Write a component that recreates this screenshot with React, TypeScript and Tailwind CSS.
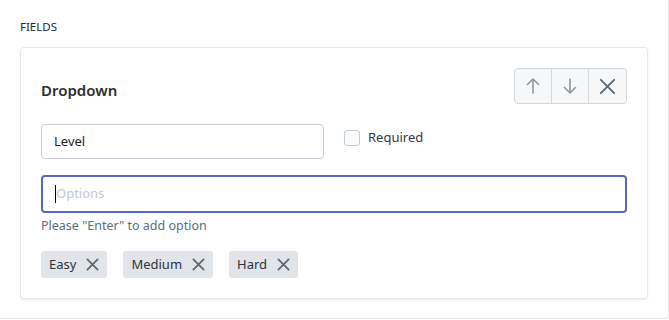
import React from 'react';

const tags = ['Easy', 'Medium', 'Hard'];

const XIcon: React.FC<{ className?: string; size?: number; stroke?: number }> = ({ className, size = 13, stroke = 2 }) => (
  <svg width={size} height={size} viewBox="0 0 14 14" className={className} fill="none" stroke="currentColor" strokeWidth={stroke} strokeLinecap="round">
    <path d="M1.5 1.5 L12.5 12.5 M12.5 1.5 L1.5 12.5" />
  </svg>
);

const App: React.FC = () => {
  return (
    <div
      className="w-[669px] h-[320px] bg-white"
      style={{ fontFamily: '"Noto Sans", "Open Sans", sans-serif' }}
    >
      <div className="h-[319px] border-r border-b border-[#e4e4e4] rounded-br-[4px] pt-[19px] pl-5 pr-5 pb-5 flex flex-col">
        <div className="text-[11.5px] leading-4 text-[#1c2a38] uppercase mb-3">Fields</div>

        {/* Field card */}
        <div className="flex-1 bg-white border border-[#e8e8e8] rounded-[4px] shadow-[0_1px_2px_rgba(0,0,0,0.08)] p-5">
          <div className="flex items-center justify-between h-9 mb-5">
            <h3 className="text-[15px] font-semibold text-[#2b2f33] pt-2">Dropdown</h3>
            <div className="flex h-9 border border-[#d3d8de] rounded-[4px] bg-[#f5f7f9] overflow-hidden">
              <button className="w-[37px] flex items-center justify-center text-[#8d97a1] border-r border-[#d3d8de]">
                <svg width="14" height="18" viewBox="0 0 14 18" fill="none" stroke="currentColor" strokeWidth="1.6" strokeLinecap="round" strokeLinejoin="round">
                  <path d="M7 16 V2 M1.5 7.5 L7 2 L12.5 7.5" />
                </svg>
              </button>
              <button className="w-[37px] flex items-center justify-center text-[#8d97a1] border-r border-[#d3d8de]">
                <svg width="14" height="18" viewBox="0 0 14 18" fill="none" stroke="currentColor" strokeWidth="1.6" strokeLinecap="round" strokeLinejoin="round">
                  <path d="M7 2 V16 M1.5 10.5 L7 16 L12.5 10.5" />
                </svg>
              </button>
              <button className="w-[37px] flex items-center justify-center text-[#5f6a75]">
                <XIcon size={17} stroke={1.6} />
              </button>
            </div>
          </div>

          <div className="grid grid-cols-2 gap-5">
            <div className="h-[35px] border border-[#c9ced6] rounded-[4px] px-3 flex items-center text-[13px] text-[#1f2328]">
              Level
            </div>
            <label className="flex items-center gap-2 h-[28px]">
              <span className="w-4 h-4 border border-[#c4cad1] rounded-[3px] bg-[#fafbfc]"></span>
              <span className="text-[13px] text-[#2f3a45]">Required</span>
            </label>
          </div>

          <div className="mt-4 h-[38px] border-2 border-[#5b68bf] rounded-[4px] pl-3 flex items-center text-[13px]">
            <span className="w-px h-[18px] bg-black"></span>
            <span className="text-[#c3c8cf]">Options</span>
          </div>

          <div className="mt-[3px] text-[12.5px] leading-5 text-[#616c77]">Please "Enter" to add option</div>

          <div className="mt-[15px] flex gap-4">
            {tags.map((t) => (
              <div key={t} className="h-[27px] flex items-center gap-[10px] pl-2 pr-2 rounded-[3px] bg-[#e1e4e9] text-[13px] text-[#2b333b]">
                {t}
                <XIcon className="text-[#5f6a75]" />
              </div>
            ))}
          </div>
        </div>
      </div>
    </div>
  );
};

export default App;
